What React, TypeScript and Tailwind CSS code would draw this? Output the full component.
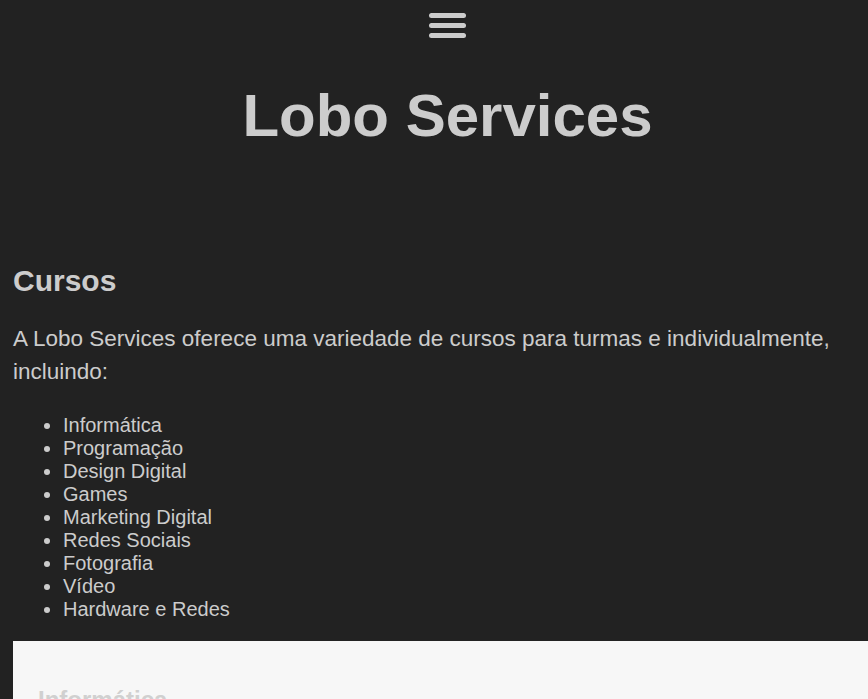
export default function App() {
  const cursos = [
    'Informática',
    'Programação',
    'Design Digital',
    'Games',
    'Marketing Digital',
    'Redes Sociais',
    'Fotografia',
    'Vídeo',
    'Hardware e Redes',
  ]

  return (
    <div className="min-h-screen bg-[#222222] overflow-hidden font-['Liberation_Sans',Arial,sans-serif] text-[#cccccc]">
      <div className="w-[895px] px-[13px]">
        {/* Header */}
        <header className="flex flex-col items-center">
          <button className="mt-[13px] flex flex-col gap-[5px]" aria-label="menu">
            <span className="block w-[37px] h-[5px] rounded-full bg-[#cccccc]" />
            <span className="block w-[37px] h-[5px] rounded-full bg-[#cccccc]" />
            <span className="block w-[37px] h-[5px] rounded-full bg-[#cccccc]" />
          </button>
          <h1 className="mt-[43px] text-[60px] leading-[69px] font-bold">Lobo Services</h1>
        </header>

        {/* Cursos */}
        <section className="mt-[114px]">
          <h2 className="text-[30px] leading-[34px] font-bold">Cursos</h2>
          <p className="mt-[24px] text-[22.5px] leading-[33px]">
            A Lobo Services oferece uma variedade de cursos para turmas e individualmente, incluindo:
          </p>
          <ul className="mt-[26px] list-disc pl-[50px] text-[20px] leading-[23px]">
            {cursos.map(c => (
              <li key={c}>{c}</li>
            ))}
          </ul>
        </section>

        <div className="mt-[20px] bg-[#f7f7f7] px-[25px] pt-[45px] pb-[40px]">
          <h3 className="text-[24px] leading-[28px] font-bold text-[#d0d0d0]">Informática</h3>
        </div>
      </div>
    </div>
  )
}
